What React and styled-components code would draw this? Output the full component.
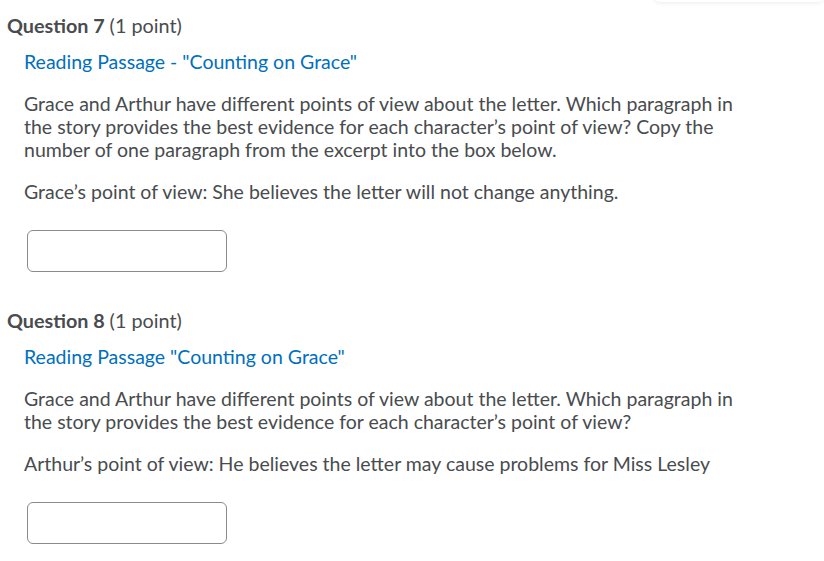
import React from "react";
import styled, { createGlobalStyle } from "styled-components";

const Global = createGlobalStyle`
  html, body { margin: 0; padding: 0; background: #fff; }
  body { font-family: Lato, "Noto Sans", sans-serif; color: #494c4e; }
`;

const Page = styled.div`
  position: relative;
  width: 824px;
  height: 561px;
  overflow: hidden;
  padding: 14px 0 0 7px;
  box-sizing: border-box;
`;

const TopShadow = styled.div`
  position: absolute;
  top: -6px;
  right: 0;
  width: 170px;
  height: 8px;
  border-radius: 0 0 6px 6px;
  box-shadow: 0 1px 4px rgba(0, 0, 0, 0.08);
  background: #fff;
`;

const Question = styled.section`
  display: flex;
  flex-direction: column;
  margin-bottom: 37px;
`;

const Heading = styled.h2`
  margin: 0;
  font-size: 19.8px;
  line-height: 23px;
  font-weight: 700;
  color: #494c4e;
`;

const Points = styled.span`
  font-weight: 400;
`;

const Body = styled.div`
  padding-left: 17px;
  display: flex;
  flex-direction: column;
`;

const Link = styled.a`
  margin-top: 13px;
  font-size: 19.5px;
  line-height: 23px;
  color: #006fbf;
  text-decoration: none;
`;

const Para = styled.p`
  margin: ${(p) => p.$top || 0}px 0 0;
  font-size: 19.5px;
  line-height: 23px;
  max-width: 740px;
`;

const Input = styled.input`
  margin: 27px 0 0 3px;
  width: 200px;
  height: 42px;
  box-sizing: border-box;
  border: 1px solid #8a8a8a;
  border-radius: 6px;
  background: #fff;
`;

export default function App() {
  return (
    <Page>
      <Global />
      <TopShadow />
      <Question>
        <Heading>
          Question 7 <Points>(1 point)</Points>
        </Heading>
        <Body>
          <Link href="#">Reading Passage - "Counting on Grace"</Link>
          <Para $top={19}>
            Grace and Arthur have different points of view about the letter. Which paragraph in
            <br />
            the story provides the best evidence for each character’s point of view? Copy the
            <br />
            number of one paragraph from the excerpt into the box below.
          </Para>
          <Para $top={19}>
            Grace’s point of view: She believes the letter will not change anything.
          </Para>
          <Input type="text" />
        </Body>
      </Question>
      <Question>
        <Heading>
          Question 8 <Points>(1 point)</Points>
        </Heading>
        <Body>
          <Link href="#">Reading Passage "Counting on Grace"</Link>
          <Para $top={19}>
            Grace and Arthur have different points of view about the letter. Which paragraph in
            <br />
            the story provides the best evidence for each character’s point of view?
          </Para>
          <Para $top={19}>
            Arthur’s point of view: He believes the letter may cause problems for Miss Lesley
          </Para>
          <Input type="text" />
        </Body>
      </Question>
    </Page>
  );
}
